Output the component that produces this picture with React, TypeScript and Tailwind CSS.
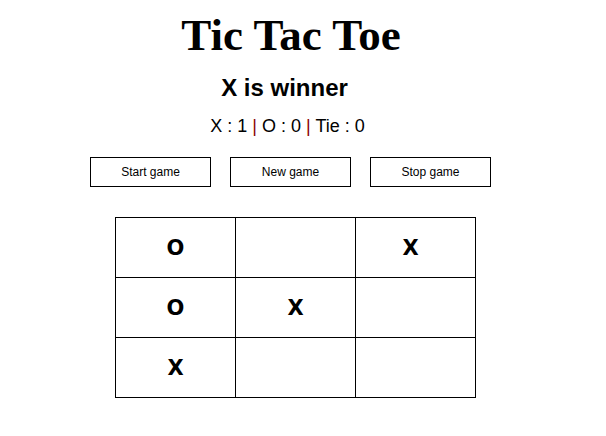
const board = ["O", "", "X", "O", "X", "", "X", "", ""];

export default function App() {
  return (
    <main className="w-[590px] bg-white text-black flex flex-col items-center font-['Liberation_Sans',Arial,sans-serif]">
      <h1 className="mt-[10px] mr-[8px] text-[45px] leading-[51px] font-bold font-['Liberation_Serif','Times_New_Roman',serif]">
        Tic Tac Toe
      </h1>
      <h2 className="mt-[13px] mr-[21px] text-[24px] leading-[28px] font-bold">X is winner</h2>
      <p className="mt-[14px] mr-[15px] text-[18px] leading-[21px]">
        X : 1 <span className="text-[#8b0000]">|</span> O : 0{" "}
        <span className="text-[#8b0000]">|</span> Tie : 0
      </p>
      <div className="mt-[20px] self-start pl-[90px] flex gap-[19px]">
        <button className="w-[121px] h-[30px] border border-black bg-white text-[12px]">Start game</button>
        <button className="w-[121px] h-[30px] border border-black bg-white text-[12px]">New game</button>
        <button className="w-[121px] h-[30px] border border-black bg-white text-[12px]">Stop game</button>
      </div>
      <div className="mt-[30px] self-start ml-[115px] grid grid-cols-3 border-l border-t border-black w-[361px]">
        {board.map((v, i) => (
          <div
            key={i}
            className={`h-[60px] pt-[2px] border-r border-b border-black flex items-center justify-center text-[21px] font-bold font-['DejaVu_Sans',Verdana,sans-serif] ${
              i === 2 ? "pr-[10px]" : ""
            }`}
          >
            {v}
          </div>
        ))}
      </div>
    </main>
  );
}
